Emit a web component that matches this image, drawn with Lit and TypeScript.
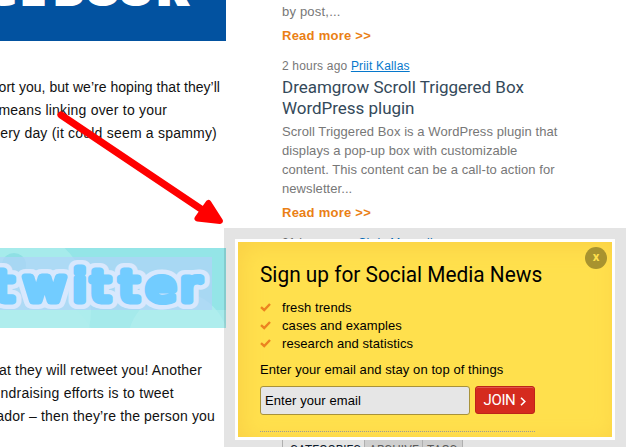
import { LitElement, html, css, svg } from "lit";
import { customElement } from "lit/decorators.js";

@customElement("article-column")
class ArticleColumn extends LitElement {
  static styles = css`
    :host { display: flex; flex-direction: column; width: 226px; height: 447px; overflow: hidden; }
    svg { display: block; flex: none; }
    .copy { display: flex; flex-direction: column; color: #111; font: 14px/23px "Liberation Sans", Arial, sans-serif; letter-spacing: .12px; }
    .line { display: flex; justify-content: flex-end; white-space: nowrap; }
    .first { height: 172px; margin-top: 35px; }
    .second { margin-top: 31px; letter-spacing: .16px; }
    .e1 { width: 220px; letter-spacing: .03px; } .e2 { width: 167px; letter-spacing: .2px; } .e3 { width: 217px; letter-spacing: .21px; }
    .e4 { width: 202px; } .e5 { width: 174px; letter-spacing: .25px; } .e6 { width: 215px; }
    .fb { font: 800 47px "Open Sans", sans-serif; fill: #fff; stroke: #fff; stroke-width: 2px; }
    .tw { font: 400 42px "DejaVu Sans", sans-serif; stroke-linejoin: round; stroke-linecap: round; }
    .halo { fill: #d8e8fd; stroke: #d8e8fd; stroke-width: 16px; }
    .ink { fill: #72ccff; stroke: #72ccff; stroke-width: 7px; }
    .wide { font-size: 45px; }
  `;
  render() {
    const word = html`t<tspan class="wide">w</tspan>itter`;
    return html`
      <svg width="226" height="41" viewBox="0 0 226 41">
        <rect width="226" height="41" fill="#0252a0" />
        <text class="fb" x="-14 20 53 84 117 156" y="5">CEBOOK</text>
      </svg>
      <div class="copy first">
        <div class="line e1">ort you, but we’re hoping that they’ll</div>
        <div class="line e2">means linking over to your</div>
        <div class="line e3">ery day (it could seem a spammy)</div>
      </div>
      <svg width="226" height="80" viewBox="0 0 226 80">
        <rect width="226" height="80" fill="#94e5e7" />
        <g fill="#b2eeee">
          <circle cx="5" cy="62" r="86" opacity=".6" />
          <circle cx="178" cy="94" r="50" opacity=".7" />
          <circle cx="25" cy="118" r="76" opacity=".4" />
          <rect y="62" width="226" height="18" opacity=".55" />
        </g>
        <circle cx="14" cy="17" r="12" fill="#8fe0e4" />
        <rect y="9" width="212" height="53" fill="#b0d2f8" opacity=".72" />
        <g transform="scale(1.15 1)">
          <text class="tw halo" x="-5 20.500 63.500 79 104 127 157" y="53">t<tspan class="wide">w</tspan>itter</text>
          <text class="tw ink" x="-5 20.500 63.500 79 104 127 157" y="53">t<tspan class="wide">w</tspan>itter</text>
        </g>
      </svg>
      <div class="copy second">
        <div class="line e4">at they will retweet you! Another</div>
        <div class="line e5">ndraising efforts is to tweet</div>
        <div class="line e6">ador – then they’re the person you</div>
      </div>`;
  }
}

@customElement("news-feed")
class NewsFeed extends LitElement {
  static styles = css`
    :host { display: flex; flex-direction: column; width: 300px; height: 447px; overflow: hidden; color: #777; font: 13px/19px "Liberation Sans", Arial, sans-serif; letter-spacing: .07px; white-space: nowrap; }
    .top { margin-top: 2px; letter-spacing: .2px; }
    .more { color: #ea8015; font-weight: 700; margin-top: 5px; letter-spacing: .25px; }
    .meta { margin-top: 12px; font-size: 12px; letter-spacing: .18px; }
    a { color: #0678cc; text-decoration: underline; }
    h3 { margin: 1px 0 3px; color: #34495a; font: 400 17px/21px Roboto, sans-serif; letter-spacing: -.03px; }
    .tabs { display: flex; margin-top: 186px; font: 12px/20px Roboto, sans-serif; }
    .tab { box-sizing: border-box; height: 24px; padding-left: 4px; border: 1px solid #c4c4c4; border-left: 0; background: #e8e8e8; color: #666; }
    .on { width: 83px; padding-left: 7px; border-left: 1px solid #c4c4c4; background: #fff; color: #123; }
    .arc { width: 58px; } .tag { width: 40px; }
  `;
  render() {
    return html`
      <div class="top">by post,...</div>
      <div class="more">Read more &gt;&gt;</div>
      <div class="meta">2 hours ago <a>Priit Kallas</a></div>
      <h3>Dreamgrow Scroll Triggered Box<br />WordPress plugin</h3>
      <div>Scroll Triggered Box is a WordPress plugin that<br />displays a pop-up box with customizable<br />content. This content can be a call-to action for<br />newsletter...</div>
      <div class="more">Read more &gt;&gt;</div>
      <div class="meta">21 hours ago <a>Chris Mansell</a></div>
      <div class="tabs"><div class="tab on">CATEGORIES</div><div class="tab arc">ARCHIVE</div><div class="tab tag">TAGS</div></div>`;
  }
}

@customElement("signup-box")
class SignupBox extends LitElement {
  static styles = css`
    :host { box-sizing: border-box; display: flex; width: 402px; height: 219px; padding: 11px; background: rgba(0, 0, 0, .106); font: 13px/18px "Liberation Sans", Arial, sans-serif; letter-spacing: .08px; color: #000; }
    .panel { position: relative; box-sizing: border-box; width: 380px; height: 201px; border: 3px solid #fff; padding: 19px 22px 0; background: #ffe04d; box-shadow: inset 4px 4px 22px #fad045; white-space: nowrap; }
    h2 { margin: 0; font: 400 22px/27px Roboto, sans-serif; letter-spacing: 0; transform: scaleX(.947); transform-origin: left; }
    ul { list-style: none; margin: 11px 0 0; padding: 0; }
    li { display: flex; align-items: center; gap: 10px; height: 18px; }
    li svg { margin-bottom: 2px; }
    .prompt { margin-top: 8px; }
    .form { display: flex; gap: 5px; margin-top: 7px; padding-bottom: 16px; width: 275px; border-bottom: 1px dotted #999; }
    .field { box-sizing: border-box; width: 210px; height: 29px; border: 1px solid #a8923a; border-radius: 3px; background: #e6e6e6; padding-left: 4px; line-height: 28px; }
    .join { box-sizing: border-box; display: flex; justify-content: center; gap: 5px; width: 60px; height: 28px; border: 1px solid #bd2419; border-radius: 3px; background: #d52b1e; box-shadow: inset 0 1px #e2584c; color: #fff; font: 15px/26px Roboto, sans-serif; letter-spacing: -.4px; }
    .join svg { margin-top: 10px; }
    .close { position: absolute; top: 5px; right: 5px; width: 22px; height: 22px; border-radius: 50%; background: #a8932f; color: #ffe04d; text-align: center; font: 700 13px/20px Roboto, sans-serif; }
  `;
  render() {
    const tick = svg`<path d="M1 5.2 4.2 8 10 2" fill="none" stroke="#ec8320" stroke-width="2.4" />`;
    return html`<div class="panel">
      <div class="close">x</div>
      <h2>Sign up for Social Media News</h2>
      <ul>${["fresh trends", "cases and examples", "research and statistics"].map(
        (t) => html`<li><svg width="12" height="10" viewBox="0 0 12 10">${tick}</svg>${t}</li>`)}</ul>
      <div class="prompt">Enter your email and stay on top of things</div>
      <div class="form">
        <div class="field">Enter your email</div>
        <div class="join">JOIN<svg width="6" height="9" viewBox="0 0 6 9"><path d="M1 .8 4.8 4.5 1 8.2" fill="none" stroke="#fff" stroke-width="1.6" /></svg></div>
      </div>
    </div>`;
  }
}

@customElement("app-root")
class AppRoot extends LitElement {
  static styles = css`
    :host { position: relative; display: flex; gap: 56px; width: 626px; height: 447px; overflow: hidden; background: #fff; }
    signup-box { position: absolute; left: 224px; top: 228px; }
    .arrow { position: absolute; left: 0; top: 0; }
  `;
  render() {
    return html`<article-column></article-column><news-feed></news-feed><signup-box></signup-box>
      <svg class="arrow" width="626" height="447" viewBox="0 0 626 447">
        <path d="M61 115 204 211" stroke="#f00" stroke-width="7" stroke-linecap="round" />
        <path d="M220 221 208.500 203 197.500 218.500Z" fill="#f00" stroke="#f00" stroke-width="6" stroke-linejoin="round" />
      </svg>`;
  }
}
